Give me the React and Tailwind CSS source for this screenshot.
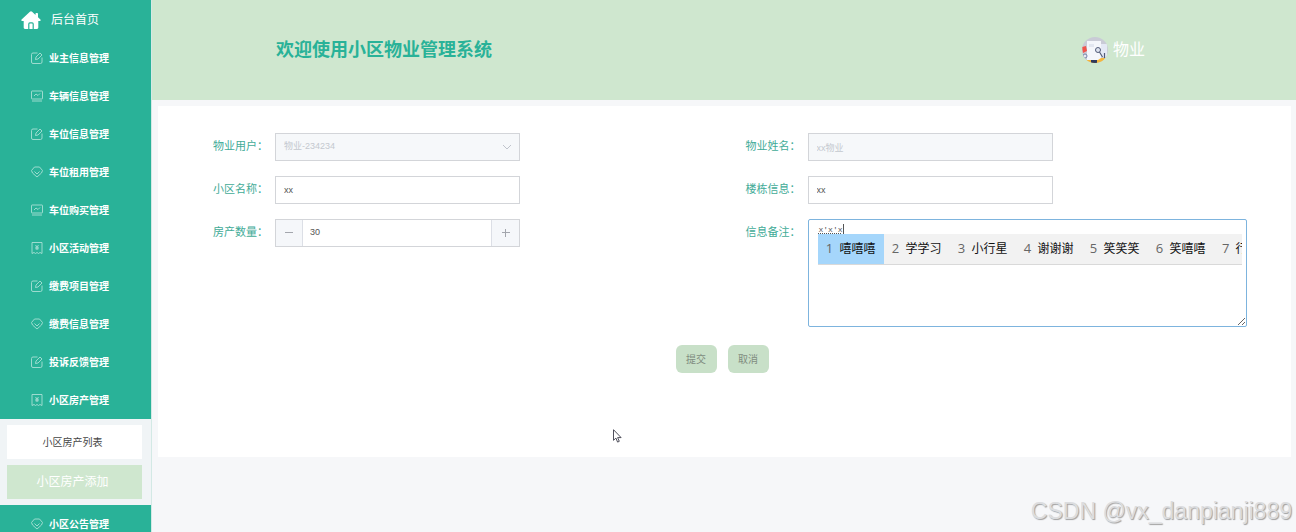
import { useState } from 'react';

/* 图标 */
function HomeIcon() {
  return (
    <svg viewBox="0 0 20 18" className="h-[18px] w-5 flex-shrink-0">
      <path
        d="M10 .2c-.4 0-.8.2-1.100.5L.6 8.600c-.6.6-.3 1.400.5 1.400H2.700v6.600c0 .8.5 1.400 1.300 1.400h12c.8 0 1.300-.6 1.300-1.400V10h1.600c.8 0 1.100-.8.5-1.400L17 6.300V2.800c0-.5-.3-.8-.8-.8h-.9c-.5 0-.8.3-.8.8v1.100L11.100.7C10.800.4 10.400.2 10 .2z"
        fill="#fff"
      />
      <path d="M7.800 18v-5c0-.7.4-1.200 1.100-1.200h2.200c.7 0 1.100.5 1.100 1.200v5" fill="none" stroke="#29b298" strokeWidth="1.200" />
    </svg>
  );
}

const iconPaths = {
  edit: (
    <>
      <path d="M13 2H4a3 3 0 0 0-3 3v15a3 3 0 0 0 3 3h15a3 3 0 0 0 3-3v-9" />
      <path d="m9 15 1-5 8-8 4 4-8 8z" />
    </>
  ),
  chart: (
    <>
      <rect x="1" y="2" width="22" height="16" rx="1" />
      <path d="m6 12 4-4 4 3 4-4M2 22h20" />
    </>
  ),
  gem: (
    <>
      <path d="M7 2h10l6 7-2 5-9 8-9-8-2-5z" />
      <path d="m7 11 5 5 5-5" />
    </>
  ),
  ticket: (
    <>
      <path d="M2 1h20v22l-4-2-3 2-3-2-3 2-3-2-4 2z" />
      <path d="m9 6 3 4 3-4M12 10v6M8.500 10.500h7M8.500 13.500h7" />
    </>
  ),
};

function MenuIcon({ name }) {
  return (
    <svg
      viewBox="0 0 24 24"
      className="h-3 w-3 flex-shrink-0 opacity-60"
      fill="none"
      stroke="#fff"
      strokeWidth="1.800"
      strokeLinejoin="round"
    >
      {iconPaths[name]}
    </svg>
  );
}

function Avatar() {
  return (
    <svg viewBox="0 0 26 26" className="h-[26px] w-[26px]">
      <defs>
        <clipPath id="avatar-clip">
          <circle cx="13" cy="13" r="13" />
        </clipPath>
      </defs>
      <g clipPath="url(#avatar-clip)">
        <rect width="26" height="26" fill="#c9cbd6" />
        <rect x="5" y="4" width="14" height="19" fill="#f4f6fb" />
        <rect x="7" y="7" width="5" height="3" fill="#e2e6f0" />
        <path d="M19 7h6v13h-6z" fill="#e4e9f5" />
        <path d="M0 10l4-1 1 5-4 2z" fill="#f0554b" />
        <circle cx="3" cy="19" r="2" fill="#e8eaf2" stroke="#7282a8" />
        <circle cx="16" cy="13" r="2.500" fill="#dfe4f0" stroke="#525b78" />
        <path d="m17.500 15 3 5M22.500 16v5" stroke="#525b78" strokeWidth="1.200" />
        <path d="M3 23h13l3-2h5v5H3z" fill="#f5b63c" />
        <path d="M9 23h6v3H9z" fill="#30395c" />
      </g>
    </svg>
  );
}

const menus = [
  { name: '业主信息管理', icon: 'edit' },
  { name: '车辆信息管理', icon: 'chart' },
  { name: '车位信息管理', icon: 'edit' },
  { name: '车位租用管理', icon: 'gem' },
  { name: '车位购买管理', icon: 'chart' },
  { name: '小区活动管理', icon: 'ticket' },
  { name: '缴费项目管理', icon: 'edit' },
  { name: '缴费信息管理', icon: 'gem' },
  { name: '投诉反馈管理', icon: 'edit' },
  { name: '小区房产管理', icon: 'ticket', open: true },
  { name: '小区公告管理', icon: 'gem' },
];

const candidates = ['嘻嘻嘻', '学学习', '小行星', '谢谢谢', '笑笑笑', '笑嘻嘻', '行'];

function Sidebar() {
  return (
    <nav className="w-[152px] flex-shrink-0 border-r border-[#d3e9e5] bg-[#29b298]">
      <a href="#home" className="flex h-[39px] items-center gap-[10px] pl-[21px] text-xs text-white">
        <HomeIcon />
        后台首页
      </a>
      <ul>
        {menus.map((m) => (
          <li key={m.name}>
            <button
              type="button"
              className="flex h-[38px] w-full items-center gap-[6px] pl-[31px] text-[10px] font-bold text-white"
            >
              <MenuIcon name={m.icon} />
              {m.name}
            </button>
            {m.open && (
              <div className="flex flex-col gap-[6px] bg-[#f0f4f6] py-[6px] pl-[7px] pr-[9px]">
                <a href="#list" className="flex h-[34px] items-center justify-center bg-white text-[10px] text-[#444]">
                  <span className="pr-1">小区房产列表</span>
                </a>
                <a href="#add" className="flex h-[34px] items-center justify-center bg-[#cfe7cf] text-xs text-white">
                  <span className="pr-1">小区房产添加</span>
                </a>
              </div>
            )}
          </li>
        ))}
      </ul>
    </nav>
  );
}

function Field({ id, label, children }) {
  return (
    <div className="flex items-start">
      <label
        htmlFor={id}
        className="h-7 w-[93px] flex-shrink-0 pr-[7px] text-right text-[11px] leading-[26px] text-[#42ab97]"
      >
        {label}：
      </label>
      {children}
    </div>
  );
}

function TextInput({ id, value, onChange, disabled }) {
  return (
    <input
      id={id}
      type="text"
      value={value}
      onChange={onChange}
      disabled={disabled}
      className="h-7 w-[245px] border border-[#d3d5d9] bg-white px-2 text-[9px] text-[#555] outline-none disabled:bg-[#f6f8fa] disabled:text-[#c4c8cf]"
    />
  );
}

function CandidateBar() {
  return (
    <ol className="absolute left-[10px] right-[5px] top-[15px] flex h-[31px] overflow-hidden border-b border-[#d9d9d9] bg-[#f2f2f2] text-xs text-[#111]">
      {candidates.map((word, i) => (
        <li
          key={word}
          className={
            'flex flex-shrink-0 items-center gap-[6px] whitespace-nowrap px-2 ' +
            (i === 0 ? 'bg-[#a5d6fb]' : '')
          }
        >
          <span className="w-2 text-center font-['Open_Sans',sans-serif] text-[13px] text-[#666]">{i + 1}</span>
          {word}
        </li>
      ))}
    </ol>
  );
}

export default function App() {
  const [community, setCommunity] = useState('xx');
  const [building, setBuilding] = useState('xx');
  const [count, setCount] = useState(30);
  const [remark, setRemark] = useState("x'x'x");

  return (
    <div
      lang="zh-CN"
      className="relative flex h-screen overflow-hidden bg-[#f6f7f9] font-['Liberation_Sans','Noto_Sans_CJK_SC',sans-serif]"
    >
      <Sidebar />

      <div className="min-w-0 flex-1">
        <header className="flex h-[100px] items-center justify-between bg-[#cfe7cf] pl-[124px] pr-[151px]">
          <h1 className="text-lg font-bold text-[#29b298]">欢迎使用小区物业管理系统</h1>
          <div className="flex items-center gap-[5px] text-base text-white">
            <Avatar />
            物业
          </div>
        </header>

        <main className="ml-[6px] mr-[5px] mt-[6px] bg-white pb-[84px] pt-[27px]">
          <form onSubmit={(e) => e.preventDefault()}>
            <div className="grid grid-cols-2 gap-y-[15px] pl-6 pr-11">
              <Field id="user" label="物业用户">
                <div className="relative">
                  <select
                    id="user"
                    disabled
                    className="block h-7 w-[245px] appearance-none border border-[#d3d5d9] bg-[#f6f8fa] px-2 text-[9px] text-[#c4c8cf] opacity-100"
                  >
                    <option>物业-234234</option>
                  </select>
                  <svg
                    viewBox="0 0 10 6"
                    className="absolute right-2 top-[11px] h-[6px] w-[10px]"
                    fill="none"
                    stroke="#c0c4cc"
                  >
                    <path d="m1 1 4 4 4-4" />
                  </svg>
                </div>
              </Field>
              <Field id="name" label="物业姓名">
                <TextInput id="name" value="xx物业" disabled />
              </Field>

              <Field id="community" label="小区名称">
                <TextInput id="community" value={community} onChange={(e) => setCommunity(e.target.value)} />
              </Field>
              <Field id="building" label="楼栋信息">
                <TextInput id="building" value={building} onChange={(e) => setBuilding(e.target.value)} />
              </Field>

              <Field id="count" label="房产数量">
                <div className="flex h-7 w-[245px] border border-[#d3d5d9] text-[#a3a6ad]">
                  <button
                    type="button"
                    aria-label="减少"
                    onClick={() => setCount(count - 1)}
                    className="flex w-[27px] items-center justify-center border-r border-[#dcdfe6] bg-[#f5f7fa]"
                  >
                    <svg viewBox="0 0 8 8" className="h-2 w-2" stroke="currentColor">
                      <path d="M0 3.500h8" />
                    </svg>
                  </button>
                  <input
                    id="count"
                    type="text"
                    value={count}
                    onChange={(e) => setCount(Number(e.target.value) || 0)}
                    className="min-w-0 flex-1 px-[7px] text-[9px] text-[#555] outline-none"
                  />
                  <button
                    type="button"
                    aria-label="增加"
                    onClick={() => setCount(count + 1)}
                    className="flex w-7 items-center justify-center border-l border-[#dcdfe6] bg-[#f5f7fa]"
                  >
                    <svg viewBox="0 0 8 8" className="h-2 w-2" stroke="currentColor">
                      <path d="M0 3.500h8M3.500 0v8" />
                    </svg>
                  </button>
                </div>
              </Field>
              <Field id="remark" label="信息备注">
                <div className="relative flex-1">
                  <textarea
                    id="remark"
                    value={remark}
                    onChange={(e) => setRemark(e.target.value)}
                    className="block h-[108px] w-full rounded-xs border border-[#7db4de] px-[10px] py-1 font-['Liberation_Mono',monospace] text-[8px] leading-3 text-[#555] underline decoration-dotted underline-offset-1 outline-none"
                  />
                  <span className="absolute left-[35px] top-[5px] h-[10px] w-px bg-[#555]" />
                  <CandidateBar />
                </div>
              </Field>
            </div>

            <div className="mt-[18px] flex justify-center gap-[11px] pr-[5px] text-[10px] text-[#808c80]">
              <button type="submit" className="h-7 w-[41px] rounded-md bg-[#c8e0c8]">
                提交
              </button>
              <button type="button" className="h-7 w-[41px] rounded-md bg-[#c8e0c8]">
                取消
              </button>
            </div>
          </form>
        </main>
      </div>

      {/* 鼠标指针 */}
      <svg viewBox="0 0 9 14" className="absolute left-[613px] top-[429px] h-[14px] w-[9px]">
        <path
          d="M.5.7v10.600l2.400-2.200 1.700 4 1.700-.8-1.700-3.700h3.500z"
          fill="#fff"
          stroke="#3c3c4a"
          strokeWidth=".9"
        />
      </svg>

      <div className="absolute bottom-1 right-1 whitespace-nowrap font-['Liberation_Sans',sans-serif] text-[23px] text-[#dcdddf] [text-shadow:1px_1px_1px_#a0a0a0]">
        CSDN @vx_danpianji889
      </div>
    </div>
  );
}
